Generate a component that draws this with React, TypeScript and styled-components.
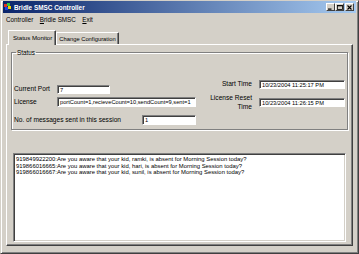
import styled, { createGlobalStyle } from "styled-components";

const Global = createGlobalStyle`
  html, body { margin: 0; padding: 0; background: #d4d0c8; }
  body { font-family: "Liberation Sans", Arial, sans-serif; }
`;

const Window = styled.div`
  width: 359px;
  height: 254px;
  box-sizing: border-box;
  background: #d4d0c8;
  border: 1px solid;
  border-color: #d4d0c8 #404040 #404040 #d4d0c8;
  box-shadow: inset 1px 1px #fff, inset -1px -1px #808080;
  padding: 0 2px 2px 2px;
  display: flex;
  flex-direction: column;
`;

const TitleBar = styled.div`
  height: 12px;
  display: flex;
  align-items: center;
  background: linear-gradient(to right, #0a246a, #a6caf0);
  color: #fff;
  font-weight: bold;
  font-size: 6.4px;
  padding: 0 2px 0 0;
`;

const TitleText = styled.span`
  flex: 1;
  margin-left: 2px;
`;

const CaptionButton = styled.div<{ $gap?: number }>`
  width: 9px;
  height: 8px;
  box-sizing: border-box;
  background: #d4d0c8;
  border: 1px solid;
  border-color: #fff #404040 #404040 #fff;
  display: flex;
  align-items: center;
  justify-content: center;
  margin-left: ${(p) => p.$gap ?? 0}px;
`;

const MenuBar = styled.div`
  height: 12px;
  display: flex;
  align-items: center;
  font-size: 6.3px;
  color: #000;
`;

const MenuItem = styled.span`
  padding: 0 3px;
  margin-right: 0.5px;
  u { text-decoration-thickness: 0.5px; }
`;

const Client = styled.div`
  flex: 1;
  display: flex;
  flex-direction: column;
  padding: 5px 3px 5px 3px;
`;

const TabStrip = styled.div`
  display: flex;
  align-items: flex-end;
  height: 14px;
  padding-left: 2px;
  position: relative;
  z-index: 1;
`;

const Tab = styled.div<{ $active?: boolean }>`
  box-sizing: border-box;
  height: ${(p) => (p.$active ? 15 : 12)}px;
  margin-bottom: ${(p) => (p.$active ? -1 : 0)}px;
  padding: ${(p) => (p.$active ? "0 3px 1px 4px" : "0 2px")};
  display: flex;
  align-items: center;
  font-size: ${(p) => (p.$active ? 6.1 : 5.8)}px;
  background: #d4d0c8;
  border-top: 1px solid #fff;
  border-left: 1px solid #fff;
  border-right: 1px solid #404040;
  border-top-left-radius: 1px;
  border-top-right-radius: 1px;
  box-shadow: inset -1px 0 #808080;
  white-space: nowrap;
`;

const Panel = styled.div`
  flex: 1;
  display: flex;
  flex-direction: column;
  box-sizing: border-box;
  border: 1px solid;
  border-color: #fff #404040 #404040 #fff;
  box-shadow: inset -1px -1px #808080;
  padding: 4px 4px 3px 4px;
`;

const GroupBox = styled.fieldset`
  margin: 0;
  padding: 0 0 4px 2px;
  border: 1px solid #808080;
  box-shadow: 1px 1px #fff, inset 1px 1px #fff;
  font-size: 6.3px;
`;

const Legend = styled.legend`
  padding: 0 1px;
  margin-left: 2px;
  font-size: 6.3px;
`;

const GroupBody = styled.div`
  display: flex;
  padding-top: 24px;
  gap: 8px;
`;

const Column = styled.div<{ $top?: number; $w: number }>`
  display: flex;
  flex-direction: column;
  margin-top: ${(p) => p.$top ?? 0}px;
  width: ${(p) => p.$w}px;
`;

const Row = styled.div<{ $top?: number }>`
  display: flex;
  align-items: center;
  margin-top: ${(p) => p.$top ?? 0}px;
`;

const Label = styled.span<{ $w?: number; $right?: boolean }>`
  width: ${(p) => (p.$w ? `${p.$w}px` : "auto")};
  flex: ${(p) => (p.$w ? "none" : "1")};
  text-align: ${(p) => (p.$right ? "right" : "left")};
  font-size: 6.6px;
  line-height: 8.5px;
  white-space: nowrap;
`;

const Field = styled.div<{ $w: number; $h?: number }>`
  width: ${(p) => p.$w}px;
  height: ${(p) => p.$h ?? 9}px;
  box-sizing: border-box;
  background: #fff;
  border: 1px solid;
  border-color: #808080 #fff #fff #808080;
  box-shadow: inset 1px 1px #404040;
  font-size: 5.7px;
  line-height: 7px;
  padding: 1px 0 0 2px;
  white-space: nowrap;
  overflow: hidden;
  flex: none;
`;

const Spacer = styled.div`
  flex: 1;
`;

const Log = styled.div`
  height: 89px;
  margin: 0 2px 0 2px;
  box-sizing: border-box;
  background: #fff;
  border: 1px solid;
  border-color: #808080 #fff #fff #808080;
  box-shadow: inset 1px 1px #404040, inset -1px -1px #d4d0c8;
  padding: 2px 2px;
  font-size: 5.9px;
  line-height: 6.6px;
  white-space: nowrap;
`;

const messages = [
  "919849922200:Are you aware that your kid, ramki, is absent for Morning Session today?",
  "919866016665:Are you aware that your kid, hari, is absent for Morning Session today?",
  "919866016667:Are you aware that your kid, sunil, is absent for Morning Session today?",
];

const AppIcon = () => (
  <svg width="9" height="9" viewBox="0 0 9 9">
    <rect x="1" y="1" width="3" height="3" fill="#e03020" />
    <rect x="4" y="0" width="3" height="3" fill="#30c040" />
    <rect x="2" y="4" width="3" height="3" fill="#2040e0" />
    <rect x="5" y="3" width="3" height="3" fill="#f0d000" />
  </svg>
);

export default function App() {
  return (
    <>
      <Global />
      <Window>
        <TitleBar>
          <AppIcon />
          <TitleText>Bridle SMSC Controller</TitleText>
          <CaptionButton>
            <svg width="5" height="5" viewBox="0 0 5 5">
              <rect x="0" y="3.5" width="3.5" height="1.2" fill="#000" />
            </svg>
          </CaptionButton>
          <CaptionButton>
            <svg width="6" height="5" viewBox="0 0 6 5">
              <rect x="0.5" y="0.5" width="5" height="4" fill="none" stroke="#000" strokeWidth="0.8" />
              <rect x="0.5" y="0.3" width="5" height="1" fill="#000" />
            </svg>
          </CaptionButton>
          <CaptionButton $gap={1}>
            <svg width="5" height="5" viewBox="0 0 5 5">
              <path d="M0.5 0.5 L4.5 4.5 M4.5 0.5 L0.5 4.5" stroke="#000" strokeWidth="1.1" />
            </svg>
          </CaptionButton>
        </TitleBar>
        <MenuBar>
          <MenuItem>Controller</MenuItem>
          <MenuItem>
            <u>B</u>ridle SMSC
          </MenuItem>
          <MenuItem>
            <u>E</u>xit
          </MenuItem>
        </MenuBar>
        <Client>
          <TabStrip>
            <Tab $active>Status Monitor</Tab>
            <Tab>Change Configuration</Tab>
          </TabStrip>
          <Panel>
            <GroupBox>
              <Legend>Status</Legend>
              <GroupBody>
                <Column $top={5} $w={182}>
                  <Row>
                    <Label $w={43}>Current Port</Label>
                    <Field $w={53}>7</Field>
                  </Row>
                  <Row $top={3}>
                    <Label $w={43}>License</Label>
                    <Field $w={139} $h={10}>
                      portCount=1,recieveCount=10,sendCount=9,sent=1
                    </Field>
                  </Row>
                  <Row $top={8}>
                    <Label>No. of messages sent in this session</Label>
                    <Field $w={54} $h={10}>1</Field>
                  </Row>
                </Column>
                <Column $w={141}>
                  <Row>
                    <Spacer />
                    <Label $w={48} $right>
                      Start Time
                    </Label>
                    <Field $w={86} style={{ marginLeft: 7 }}>
                      10/23/2004 11:25:17 PM
                    </Field>
                  </Row>
                  <Row $top={5}>
                    <Label $w={48} $right>
                      License Reset
                      <br />
                      Time
                    </Label>
                    <Field $w={86} style={{ marginLeft: 7 }}>
                      10/23/2004 11:26:15 PM
                    </Field>
                  </Row>
                </Column>
              </GroupBody>
            </GroupBox>
            <Spacer />
            <Log>
              {messages.map((m) => (
                <div key={m}>{m}</div>
              ))}
            </Log>
          </Panel>
        </Client>
      </Window>
    </>
  );
}
